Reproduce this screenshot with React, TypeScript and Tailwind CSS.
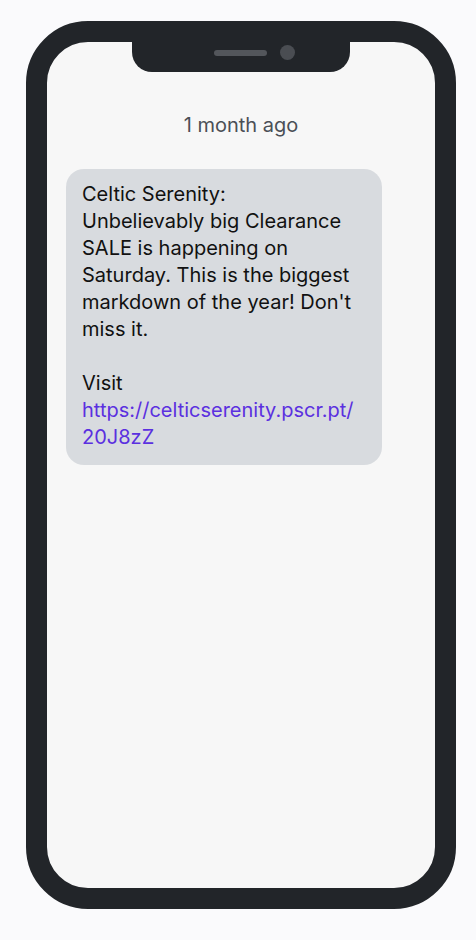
export default function App() {
  return (
    <div
      className="min-h-[940px] w-full bg-[#fafafc] pt-[21px]"
      style={{ fontFamily: "Inter, 'Noto Sans', sans-serif" }}
    >
      <div className="relative ml-[26px] h-[888px] w-[430px] rounded-[62px] border-[21px] border-[#222529] bg-[#f7f7f7]">
        {/* notch */}
        <div className="absolute left-[85px] top-0 flex h-[30px] w-[218px] items-center justify-center gap-[13px] rounded-b-[20px] bg-[#222529] pb-[9px] pl-[26px]">
          <div className="h-[6px] w-[53px] rounded-full bg-[#53565b]" />
          <div className="h-[15px] w-[15px] rounded-full bg-[#4a4d52]" />
        </div>

        <div className="px-[19px] pt-[69px]">
          <p className="text-center text-[20px] leading-7 text-[#4b4f56]">1 month ago</p>

          <div className="mt-[30px] w-[316px] rounded-[18px] bg-[#d8dbdf] px-4 pt-3 pb-[14px] text-[20px] leading-[27px] text-[#111111]">
            <p>
              Celtic Serenity:
              <br />
              Unbelievably big Clearance SALE is happening on Saturday. This is the biggest markdown
              of the year! Don't miss it.
            </p>
            <p className="mt-[27px]">Visit</p>
            <p className="text-[#5b30e0]">
              https://celticserenity.pscr.pt/
              <br />
              20J8zZ
            </p>
          </div>
        </div>
      </div>
    </div>
  );
}
